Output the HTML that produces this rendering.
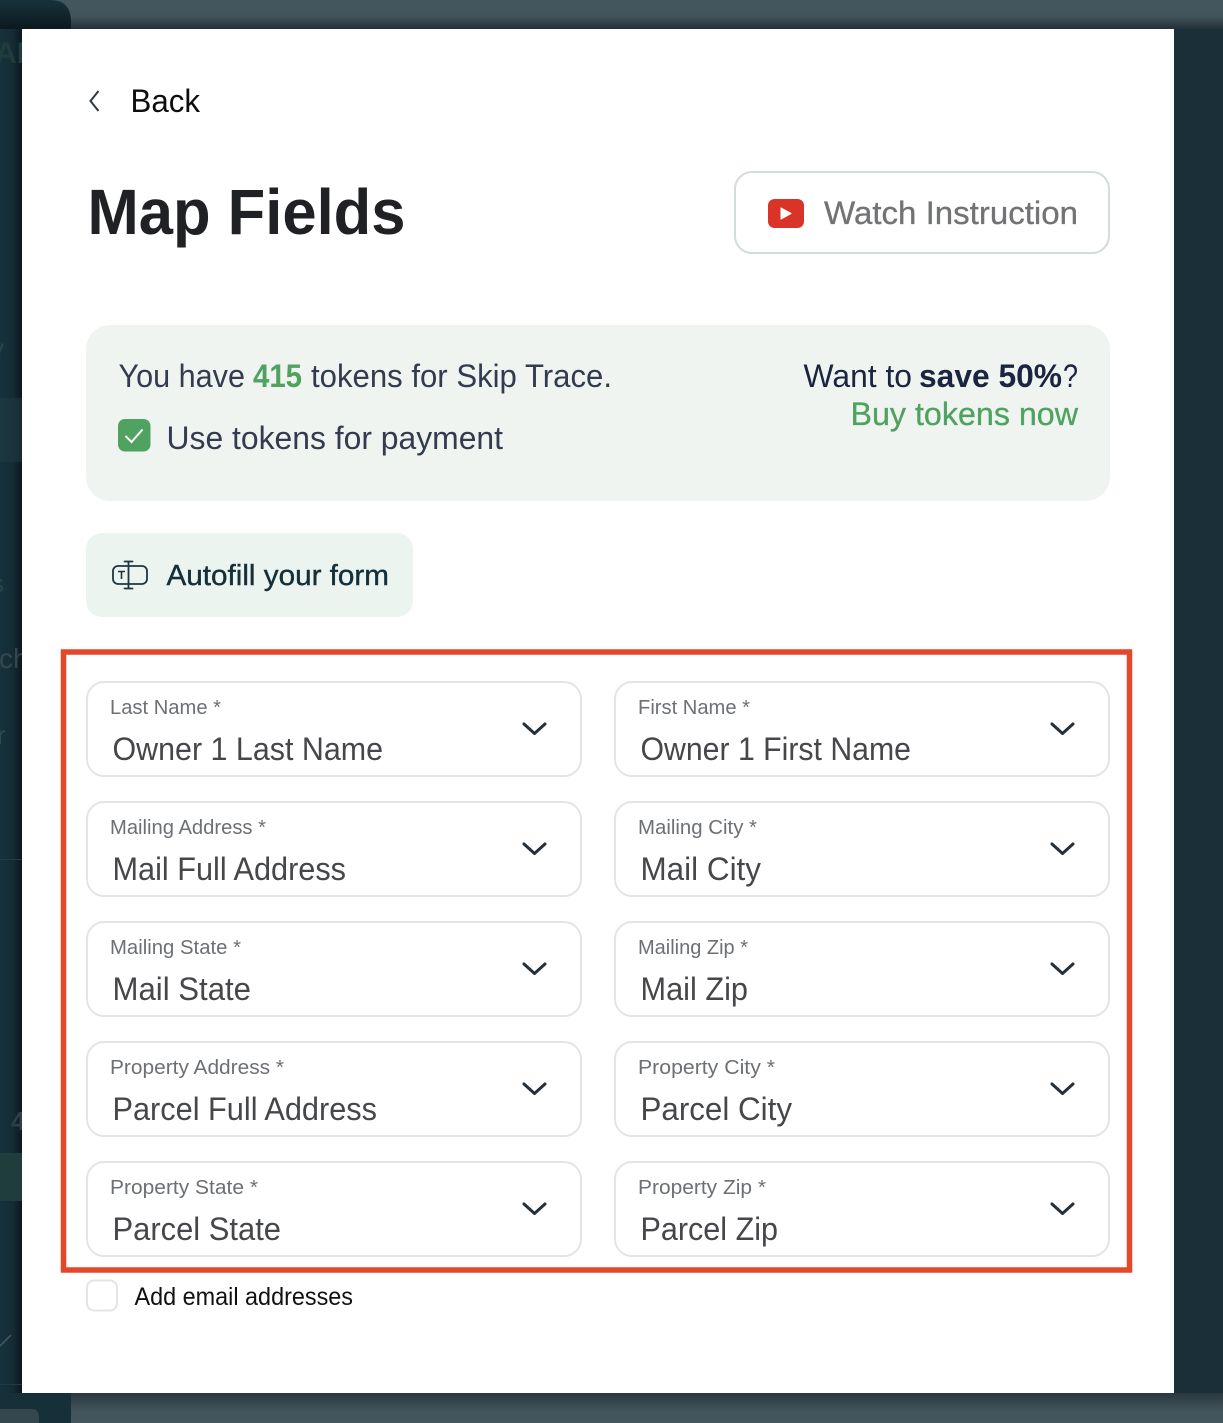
<!DOCTYPE html>
<html lang="en">
<head>
<meta charset="utf-8">
<title>Map Fields</title>
<style>
html,body{margin:0;padding:0;width:1223px;height:1423px;overflow:hidden;background:#1a2f38}
svg{display:block;position:absolute;left:0;top:0}
text{font-family:"Liberation Sans",sans-serif}
.lb{font-size:20px;fill:#6c7075}
.val{font-size:32px;fill:#45474a}
.fld{fill:#fff;stroke:#e3e4e4;stroke-width:2}
.chev{fill:none;stroke:#26303d;stroke-width:3;stroke-linecap:round;stroke-linejoin:round}
</style>
</head>
<body>
<svg width="1223" height="1423" viewBox="0 0 1223 1423" xmlns="http://www.w3.org/2000/svg">
<defs>
<linearGradient id="top" x1="0" y1="0" x2="0" y2="1"><stop offset="0" stop-color="#43565e"/><stop offset=".55" stop-color="#43555c"/><stop offset="1" stop-color="#232f35"/></linearGradient>
<linearGradient id="bot" x1="0" y1="0" x2="0" y2="1"><stop offset="0" stop-color="#2a383e"/><stop offset=".6" stop-color="#42545b"/><stop offset="1" stop-color="#45575e"/></linearGradient>
<linearGradient id="side" x1="0" y1="0" x2="1" y2="0"><stop offset="0" stop-color="#17323c"/><stop offset=".6" stop-color="#142b34"/><stop offset="1" stop-color="#0c191e"/></linearGradient>
<linearGradient id="sidetop" x1="0" y1="0" x2="0" y2="1"><stop offset="0" stop-color="#17323c"/><stop offset="1" stop-color="#0c191e"/></linearGradient>
</defs>

<!-- backdrop -->
<rect x="0" y="0" width="1223" height="1423" fill="#1a2f38"/>
<rect x="0" y="0" width="1223" height="29" fill="url(#top)"/>
<rect x="0" y="1393" width="1223" height="30" fill="url(#bot)"/>
<!-- sidebar -->
<path d="M0 0H50Q71 0 71 22V29H0Z" fill="url(#sidetop)"/>
<rect x="0" y="29" width="22" height="1364" fill="url(#side)"/>
<rect x="0" y="1393" width="71" height="30" fill="#16303a"/>
<path d="M0 1409H31Q39 1409 39 1417V1423H0Z" fill="#34474f"/>
<rect x="0" y="398" width="22" height="64" fill="#223a44" opacity=".55"/>
<rect x="0" y="1153" width="22" height="48" fill="#1f3d3a"/>
<rect x="0" y="859" width="22" height="1" fill="#25393f"/>
<rect x="0" y="1384" width="22" height="1" fill="#25393f"/>
<text x="-5" y="63" font-size="30" font-weight="700" fill="#1f3d3c">AI</text>
<text x="-9" y="357" font-size="26" fill="#2d4149">y</text>
<text x="-9" y="592" font-size="26" fill="#2d4149">s</text>
<text x="-1" y="668" font-size="28" fill="#35464d">ch</text>
<text x="-3" y="744" font-size="26" fill="#35464d">r</text>
<text x="11" y="1130" font-size="26" font-weight="700" fill="#2f4047">4</text>
<path d="M0 1346L11 1335" stroke="#4a5a60" stroke-width="1.5" fill="none"/>

<!-- modal -->
<rect x="22" y="29" width="1152" height="1364" fill="#ffffff"/>

<!-- back -->
<path d="M98.500 91L90.500 101L98.500 111" fill="none" stroke="#2c3a42" stroke-width="2"/>
<text x="130.500" y="112" font-size="32" fill="#0d0d0d" textLength="69.500" lengthAdjust="spacingAndGlyphs">Back</text>

<!-- title -->
<text x="87.500" y="234" font-size="64" font-weight="700" fill="#202124" textLength="318" lengthAdjust="spacingAndGlyphs">Map Fields</text>

<!-- watch -->
<rect x="735" y="172" width="374" height="81" rx="17" fill="#fff" stroke="#d3dbdb" stroke-width="2"/>
<rect x="768" y="199" width="36" height="29" rx="6.500" fill="#d93427"/>
<path d="M781 208L791 213.500L781 219Z" fill="#fff" stroke="#fff" stroke-width="1" stroke-linejoin="round"/>
<text x="824" y="224" font-size="32" fill="#727374" stroke="#727374" stroke-width=".3" textLength="254" lengthAdjust="spacingAndGlyphs">Watch Instruction</text>

<!-- tokens panel -->
<rect x="86" y="325" width="1024" height="176" rx="24" fill="#eff4f1"/>
<text x="118.500" y="387" font-size="32" fill="#323c4e" textLength="126.500" lengthAdjust="spacingAndGlyphs">You have</text>
<text x="253" y="387" font-size="32" font-weight="700" fill="#4fa25f" textLength="49" lengthAdjust="spacingAndGlyphs">415</text>
<text x="311" y="387" font-size="32" fill="#323c4e" textLength="301" lengthAdjust="spacingAndGlyphs">tokens for Skip Trace.</text>
<rect x="118" y="419" width="32.500" height="32.500" rx="7" fill="#4fa25f"/>
<path d="M125.500 436L131.500 442L142.500 429.500" fill="none" stroke="#fff" stroke-width="2"/>
<text x="166.500" y="449" font-size="32" fill="#323c4e" textLength="336.500" lengthAdjust="spacingAndGlyphs">Use tokens for payment</text>
<text x="803.500" y="387" font-size="32" fill="#1b2540" textLength="108.500" lengthAdjust="spacingAndGlyphs">Want to</text>
<text x="919" y="387" font-size="32" font-weight="700" fill="#1b2540" textLength="143" lengthAdjust="spacingAndGlyphs">save 50%</text>
<text x="1063" y="387" font-size="32" fill="#1b2540" textLength="15" lengthAdjust="spacingAndGlyphs">?</text>
<text x="850.500" y="425" font-size="32" fill="#4fa25f" stroke="#4fa25f" stroke-width=".3" textLength="227.500" lengthAdjust="spacingAndGlyphs">Buy tokens now</text>

<!-- autofill -->
<rect x="86" y="533" width="327" height="84" rx="16" fill="#ecf4ef"/>
<rect x="113" y="566" width="34" height="18" rx="5" fill="none" stroke="#1e3640" stroke-width="1.800"/>
<path d="M128.500 561.500V588.500M124.500 561.500H132.500M124.500 588.500H132.500" fill="none" stroke="#1e3640" stroke-width="1.800" stroke-linecap="round"/>
<path d="M118 571.500H125M121.500 571.500V579" fill="none" stroke="#1e3640" stroke-width="1.600"/>
<text x="166.500" y="585" font-size="29" fill="#16303a" stroke="#16303a" stroke-width=".4" textLength="222.500" lengthAdjust="spacingAndGlyphs">Autofill your form</text>

<!-- fields -->
<rect x="87" y="682" width="494" height="94" rx="17" class="fld"/>
<text x="110" y="714" class="lb" textLength="111" lengthAdjust="spacingAndGlyphs">Last Name *</text>
<text x="112.500" y="760" class="val" textLength="270.500" lengthAdjust="spacingAndGlyphs">Owner 1 Last Name</text>
<path d="M524 724L534.500 733.500L545 724" class="chev"/>

<rect x="615" y="682" width="494" height="94" rx="17" class="fld"/>
<text x="638" y="714" class="lb" textLength="112" lengthAdjust="spacingAndGlyphs">First Name *</text>
<text x="640.500" y="760" class="val" textLength="270.500" lengthAdjust="spacingAndGlyphs">Owner 1 First Name</text>
<path d="M1052 724L1062.500 733.500L1073 724" class="chev"/>

<rect x="87" y="802" width="494" height="94" rx="17" class="fld"/>
<text x="110" y="834" class="lb" textLength="156" lengthAdjust="spacingAndGlyphs">Mailing Address *</text>
<text x="112.500" y="880" class="val" textLength="233.500" lengthAdjust="spacingAndGlyphs">Mail Full Address</text>
<path d="M524 844L534.500 853.500L545 844" class="chev"/>

<rect x="615" y="802" width="494" height="94" rx="17" class="fld"/>
<text x="638" y="834" class="lb" textLength="119" lengthAdjust="spacingAndGlyphs">Mailing City *</text>
<text x="640.500" y="880" class="val" textLength="120.500" lengthAdjust="spacingAndGlyphs">Mail City</text>
<path d="M1052 844L1062.500 853.500L1073 844" class="chev"/>

<rect x="87" y="922" width="494" height="94" rx="17" class="fld"/>
<text x="110" y="954" class="lb" textLength="131" lengthAdjust="spacingAndGlyphs">Mailing State *</text>
<text x="112.500" y="1000" class="val" textLength="138.500" lengthAdjust="spacingAndGlyphs">Mail State</text>
<path d="M524 964L534.500 973.500L545 964" class="chev"/>

<rect x="615" y="922" width="494" height="94" rx="17" class="fld"/>
<text x="638" y="954" class="lb" textLength="110" lengthAdjust="spacingAndGlyphs">Mailing Zip *</text>
<text x="640.500" y="1000" class="val" textLength="107.500" lengthAdjust="spacingAndGlyphs">Mail Zip</text>
<path d="M1052 964L1062.500 973.500L1073 964" class="chev"/>

<rect x="87" y="1042" width="494" height="94" rx="17" class="fld"/>
<text x="110" y="1074" class="lb" textLength="174" lengthAdjust="spacingAndGlyphs">Property Address *</text>
<text x="112.500" y="1120" class="val" textLength="264.500" lengthAdjust="spacingAndGlyphs">Parcel Full Address</text>
<path d="M524 1084L534.500 1093.500L545 1084" class="chev"/>

<rect x="615" y="1042" width="494" height="94" rx="17" class="fld"/>
<text x="638" y="1074" class="lb" textLength="137" lengthAdjust="spacingAndGlyphs">Property City *</text>
<text x="640.500" y="1120" class="val" textLength="151.500" lengthAdjust="spacingAndGlyphs">Parcel City</text>
<path d="M1052 1084L1062.500 1093.500L1073 1084" class="chev"/>

<rect x="87" y="1162" width="494" height="94" rx="17" class="fld"/>
<text x="110" y="1194" class="lb" textLength="148" lengthAdjust="spacingAndGlyphs">Property State *</text>
<text x="112.500" y="1240" class="val" textLength="168.500" lengthAdjust="spacingAndGlyphs">Parcel State</text>
<path d="M524 1204L534.500 1213.500L545 1204" class="chev"/>

<rect x="615" y="1162" width="494" height="94" rx="17" class="fld"/>
<text x="638" y="1194" class="lb" textLength="128" lengthAdjust="spacingAndGlyphs">Property Zip *</text>
<text x="640.500" y="1240" class="val" textLength="137.500" lengthAdjust="spacingAndGlyphs">Parcel Zip</text>
<path d="M1052 1204L1062.500 1213.500L1073 1204" class="chev"/>

<!-- red highlight -->
<rect x="63.500" y="652" width="1066" height="618" fill="none" stroke="#e5472b" stroke-width="5.500"/>

<!-- email checkbox -->
<rect x="87" y="1280.500" width="30" height="30" rx="7" fill="#fff" stroke="#e4e5e5" stroke-width="2"/>
<text x="134.500" y="1305" font-size="25" fill="#111111" textLength="218.500" lengthAdjust="spacingAndGlyphs">Add email addresses</text>
</svg>
</body>
</html>
